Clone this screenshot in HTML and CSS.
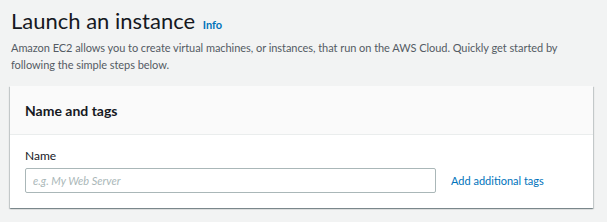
FILE: index.html
```html
<!doctype html>
<html lang="en">
<head>
    <meta charset="UTF-8">
    <title>Launch an instance</title>
    <link rel="stylesheet" href="styles.css">
</head>
<body>
<div class="page">
    <div class="page-head">
        <h1>Launch an instance <a href="javascript:;" class="info">Info</a></h1>
        <p class="desc">Amazon EC2 allows you to create virtual machines, or instances, that run on the AWS Cloud. Quickly get started by following the simple steps below.</p>
    </div>
    <div class="card">
        <div class="card-head">
            <h2>Name and tags</h2>
        </div>
        <div class="card-body">
            <label for="name">Name</label>
            <div class="field-row">
                <input type="text" id="name" placeholder="e.g. My Web Server">
                <a href="javascript:;" class="link">Add additional tags</a>
            </div>
        </div>
    </div>
    <div class="card next"></div>
</div>
</body>
</html>
```

FILE: styles.css
```css
*{
    margin: 0;
    padding: 0;
    box-sizing: border-box;
}

body{
    background-color: #f2f3f3;
    font-family: Lato, "Open Sans", sans-serif;
    color: #16191f;
    overflow: hidden;
}

.page{
    width: 583px;
    margin-left: 10px;
    padding-top: 7px;
}

.page-head{
    padding-left: 1px;
}

h1{
    font-size: 22px;
    font-weight: 400;
    line-height: 28px;
}
.info{
    font-size: 11px;
    font-weight: 700;
    color: #0073bb;
    text-decoration: none;
    margin-left: 2px;
}

.desc{
    font-size: 11px;
    line-height: 17px;
    color: #545b64;
    letter-spacing: -0.05px;
}

.card{
    background-color: #fff;
    margin-top: 13px;
    box-shadow: 0 1px 1px 0 rgba(0,28,36,.3), 1px 1px 1px 0 rgba(0,28,36,.15), -1px 1px 1px 0 rgba(0,28,36,.15);
}
.card-head{
    background-color: #fafafa;
    border-bottom: 1px solid #eaeded;
    height: 49px;
    padding: 0 15px;
    display: flex;
    align-items: center;
}
h2{
    font-size: 14px;
    font-weight: 700;
}

.card-body{
    padding: 12px 15px 15px;
}
label{
    display: block;
    font-size: 12px;
    line-height: 18px;
    margin-bottom: 3px;
}
.field-row{
    display: flex;
    align-items: center;
    gap: 15px;
}
input{
    width: 411px;
    height: 25px;
    border: 1px solid #aab7b8;
    border-radius: 2px;
    padding: 0 7px;
    font-family: inherit;
    font-size: 11px;
    outline: 0;
}
input::placeholder{
    color: #aab7b8;
    font-style: italic;
}
.link{
    font-size: 11px;
    color: #0073bb;
    text-decoration: none;
}

.next{
    height: 10px;
    margin-top: 15px;
}
```
